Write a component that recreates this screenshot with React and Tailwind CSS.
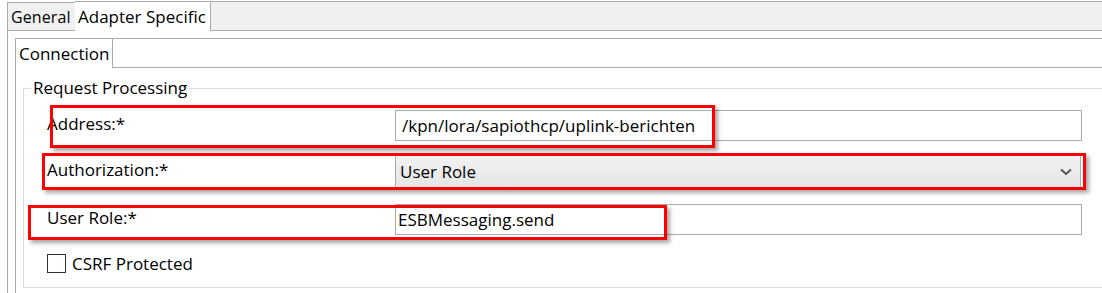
import React from "react";

const font = { fontFamily: '"Open Sans", "Noto Sans", sans-serif' };

function Chevron() {
  return (
    <svg width="12" height="8" viewBox="0 0 12 8" className="block">
      <path d="M1 1.5 L6 6 L11 1.5" fill="none" stroke="#555" strokeWidth="2" />
    </svg>
  );
}

function Row({ label, children }) {
  return (
    <div className="flex items-center">
      <div className="w-[371px] pl-[23px] pb-[4px] text-black">{label}</div>
      {children}
    </div>
  );
}

export default function App() {
  return (
    <div
      className="relative w-[1102px] h-[293px] overflow-hidden bg-white text-black text-[17px] leading-none"
      style={font}
    >
      {/* outer tabs */}
      <div className="flex h-[31px] items-end pl-[7px]">
        <div className="h-[29px] w-[68px] flex items-center pl-[3px] bg-[#f0f0f0] border-l border-t border-b border-[#acacac] text-[16px] tracking-[0.1px]">
          General
        </div>
        <div className="h-[30px] w-[136px] flex items-center pl-[3px] bg-white border-t border-r border-[#acacac]">
          Adapter Specific
        </div>
        <div className="h-[30px] flex-1 bg-[#f0f0f0] border-t border-b border-[#acacac]" />
      </div>

      {/* outer panel */}
      <div className="border-l border-[#acacac] ml-[7px] pl-[7px] pt-[7px] h-[262px]">
        {/* inner tabs */}
        <div className="flex h-[30px]">
          <div className="w-[98px] flex items-center pl-[3px] border-l border-t border-r border-[#acacac] bg-white">
            Connection
          </div>
          <div className="flex-1 border-t border-b border-[#acacac]" />
        </div>

        {/* inner panel */}
        <div className="border-l border-[#acacac] pl-[7px] pt-[11px] h-[232px]">
          <fieldset className="border border-[#dcdcdc] border-r-0 h-[209px] min-w-0 m-0 p-0 w-[1100px]">
            <legend className="ml-[7px] px-[2px] leading-[18px]">Request Processing</legend>
            <div className="flex flex-col pt-[13px]">
              <Row label="Address:*">
                <div className="w-[687px] h-[31px] border border-[#acacac] flex items-center pl-[6px]">
                  /kpn/lora/sapiothcp/uplink-berichten
                </div>
              </Row>
              <div className="h-[14px]" />
              <Row label="Authorization:*">
                <div className="w-[686px] h-[33px] border border-[#acacac] flex items-center justify-between pl-[4px] pr-[8px] bg-gradient-to-b from-[#f2f2f2] to-[#e5e5e5]">
                  <span>User Role</span>
                  <Chevron />
                </div>
              </Row>
              <div className="h-[16px]" />
              <Row label="User Role:*">
                <div className="w-[687px] h-[31px] border border-[#acacac] flex items-center pl-[2px]">
                  ESBMessaging.send
                </div>
              </Row>
              <div className="flex items-center pl-[23px] mt-[19px]">
                <div className="w-[19px] h-[19px] border border-[#333] bg-white" />
                <span className="ml-[6px]">CSRF Protected</span>
              </div>
            </div>
          </fieldset>
        </div>
      </div>

      {/* red annotation boxes */}
      <div className="absolute left-[50px] top-[105px] w-[665px] h-[43px] border-[3px] border-[#ff0000] shadow-[3px_3px_4px_rgba(0,0,0,0.35)]" />
      <div className="absolute left-[42px] top-[153px] w-[1044px] h-[37px] border-[3px] border-[#ff0000] shadow-[3px_3px_4px_rgba(0,0,0,0.35)]" />
      <div className="absolute left-[28px] top-[205px] w-[639px] h-[35px] border-[3px] border-[#ff0000] shadow-[3px_3px_4px_rgba(0,0,0,0.35)]" />
    </div>
  );
}
